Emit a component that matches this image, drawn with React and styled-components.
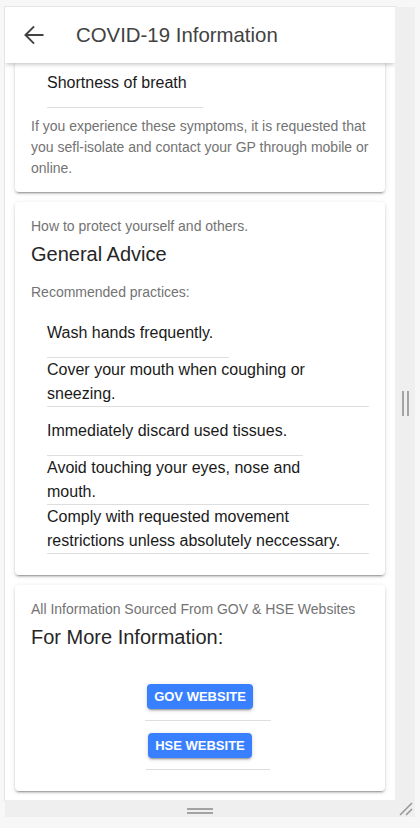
import React from 'react';
import styled, { createGlobalStyle } from 'styled-components';

const GlobalStyle = createGlobalStyle`
  *, *::before, *::after { box-sizing: border-box; }
  html, body { margin: 0; padding: 0; background: #f7f7f7; }
  body { font-family: "Liberation Sans", Arial, sans-serif; }
`;

const Stage = styled.div`
  padding: 7px 0 0 5px;
  display: grid;
  grid-template-columns: 390px 20px;
  grid-template-rows: 793px 17px;
`;

const Viewport = styled.div`
  grid-column: 1;
  grid-row: 1;
  display: flex;
  flex-direction: column;
  overflow: hidden;
  background: #fff;
  box-shadow: 0 0 0 1px #e4e4e4;
`;

const SideHandle = styled.div`
  grid-column: 2;
  grid-row: 1;
  background: #efefef;
  display: flex;
  align-items: center;
  justify-content: center;
  gap: 3px;
`;

const VBar = styled.span`
  width: 2px;
  height: 25px;
  background: #a3a3a3;
`;

const BottomBar = styled.div`
  grid-column: 1 / span 2;
  grid-row: 2;
  background: #efefef;
  display: grid;
  grid-template-columns: 390px 20px;
`;

const BottomHandle = styled.div`
  display: flex;
  flex-direction: column;
  align-items: center;
  justify-content: flex-end;
  gap: 2px;
  padding-bottom: 3px;
`;

const HBar = styled.span`
  width: 26px;
  height: 2px;
  background: #a3a3a3;
`;

const Corner = styled.div`
  display: flex;
  align-items: flex-end;
  justify-content: flex-start;
  padding: 0 0 1px 4px;
`;

const Header = styled.header`
  flex: none;
  height: 56px;
  display: flex;
  align-items: center;
  padding-left: 15px;
  background: #fff;
  position: relative;
  z-index: 1;
  box-shadow: 0 2px 4px -1px rgba(0, 0, 0, 0.18), 0 3px 4px 0 rgba(0, 0, 0, 0.06);
`;

const BackButton = styled.button`
  width: 28px;
  height: 28px;
  padding: 0;
  border: 0;
  background: none;
  display: flex;
  color: #424242;
`;

const Title = styled.h1`
  margin: 0 0 0 28px;
  font-size: 20.4px;
  font-weight: 400;
  color: #424242;
  line-height: 24px;
`;

const ScrollArea = styled.main`
  flex: 1;
  overflow: hidden;
  background: #fff;
`;

const Feed = styled.div`
  margin-top: -${(p) => p.$offset}px;
  padding: 0 10px 10px;
  display: flex;
  flex-direction: column;
  gap: 10px;
`;

const Card = styled.section`
  background: #fff;
  border-radius: 4px;
  box-shadow: 0 3px 1px -2px rgba(0, 0, 0, 0.2), 0 2px 2px 0 rgba(0, 0, 0, 0.14),
    0 1px 5px 0 rgba(0, 0, 0, 0.12);
`;

const CardHeader = styled.div`
  padding: 16px;
  display: flex;
  flex-direction: column;
  gap: 8px;
`;

const Subtitle = styled.div`
  font-size: 14px;
  line-height: 16px;
  color: #737373;
`;

const CardTitle = styled.h2`
  margin: 0;
  font-size: 20px;
  line-height: 24px;
  font-weight: 400;
  color: #262626;
`;

const CardContent = styled.div`
  padding: ${(p) => (p.$afterHeader ? '0' : '13px')} 16px 13px;
`;

const Text = styled.p`
  margin: 0;
  font-size: 14px;
  line-height: 21px;
  color: #737373;
`;

const List = styled.ul`
  list-style: none;
  margin: 0;
  padding: ${(p) => p.$top}px 0 8px;
  display: flex;
  flex-direction: column;
  align-items: ${(p) => (p.$center ? 'center' : 'flex-start')};
`;

const Item = styled.li`
  max-width: 100%;
  padding-left: 16px;
  display: flex;
`;

const ItemInner = styled.div`
  min-height: 49px;
  padding-right: 16px;
  display: flex;
  align-items: center;
  border-bottom: 1px solid #dedede;
  font-size: 16px;
  line-height: 24px;
  color: #1a1a1a;
`;

const LinkButton = styled.button`
  height: 25px;
  margin: 0 2px;
  padding: 0 7px;
  border: 0;
  border-radius: 4px;
  background: #3880ff;
  color: #fff;
  font-family: inherit;
  font-size: 13px;
  font-weight: 700;
  text-transform: uppercase;
  box-shadow: 0 3px 1px -2px rgba(0, 0, 0, 0.2), 0 2px 2px 0 rgba(0, 0, 0, 0.14),
    0 1px 5px 0 rgba(0, 0, 0, 0.12);
`;

const practices = [
  'Wash hands frequently.',
  'Cover your mouth when coughing or sneezing.',
  'Immediately discard used tissues.',
  'Avoid touching your eyes, nose and mouth.',
  'Comply with requested movement restrictions unless absolutely neccessary.',
];

const links = ['Gov Website', 'HSE Website'];

function ArrowBack() {
  return (
    <svg width="28" height="28" viewBox="0 0 512 512" fill="none">
      <path
        d="M244 400L100 256l144-144M120 256h292"
        stroke="currentColor"
        strokeWidth="36"
        strokeLinecap="square"
      />
    </svg>
  );
}

function ResizeCorner() {
  return (
    <svg width="14" height="14" viewBox="0 0 14 14">
      <path d="M1 13L13 1M7 13L13 7" stroke="#9a9a9a" strokeWidth="1.6" />
    </svg>
  );
}

export default function App() {
  return (
    <>
      <GlobalStyle />
      <Stage>
        <Viewport>
          <Header>
            <BackButton aria-label="Back">
              <ArrowBack />
            </BackButton>
            <Title>COVID-19 Information</Title>
          </Header>
          <ScrollArea>
            <Feed $offset={24}>
              <Card>
                <CardContent>
                  <List $top={7}>
                    <Item>
                      <ItemInner>Shortness of breath</ItemInner>
                    </Item>
                  </List>
                  <Text>
                    If you experience these symptoms, it is requested that you sefl-isolate and
                    contact your GP through mobile or online.
                  </Text>
                </CardContent>
              </Card>

              <Card>
                <CardHeader>
                  <Subtitle>How to protect yourself and others.</Subtitle>
                  <CardTitle>General Advice</CardTitle>
                </CardHeader>
                <CardContent $afterHeader>
                  <Text>Recommended practices:</Text>
                  <List $top={6}>
                    {practices.map((t) => (
                      <Item key={t}>
                        <ItemInner>{t}</ItemInner>
                      </Item>
                    ))}
                  </List>
                </CardContent>
              </Card>

              <Card>
                <CardHeader>
                  <Subtitle>All Information Sourced From GOV &amp; HSE Websites</Subtitle>
                  <CardTitle>For More Information:</CardTitle>
                </CardHeader>
                <CardContent $afterHeader>
                  <List $top={7} $center>
                    {links.map((t) => (
                      <Item key={t}>
                        <ItemInner>
                          <LinkButton>{t}</LinkButton>
                        </ItemInner>
                      </Item>
                    ))}
                  </List>
                </CardContent>
              </Card>
            </Feed>
          </ScrollArea>
        </Viewport>
        <SideHandle>
          <VBar />
          <VBar />
        </SideHandle>
        <BottomBar>
          <BottomHandle>
            <HBar />
            <HBar />
          </BottomHandle>
          <Corner>
            <ResizeCorner />
          </Corner>
        </BottomBar>
      </Stage>
    </>
  );
}
